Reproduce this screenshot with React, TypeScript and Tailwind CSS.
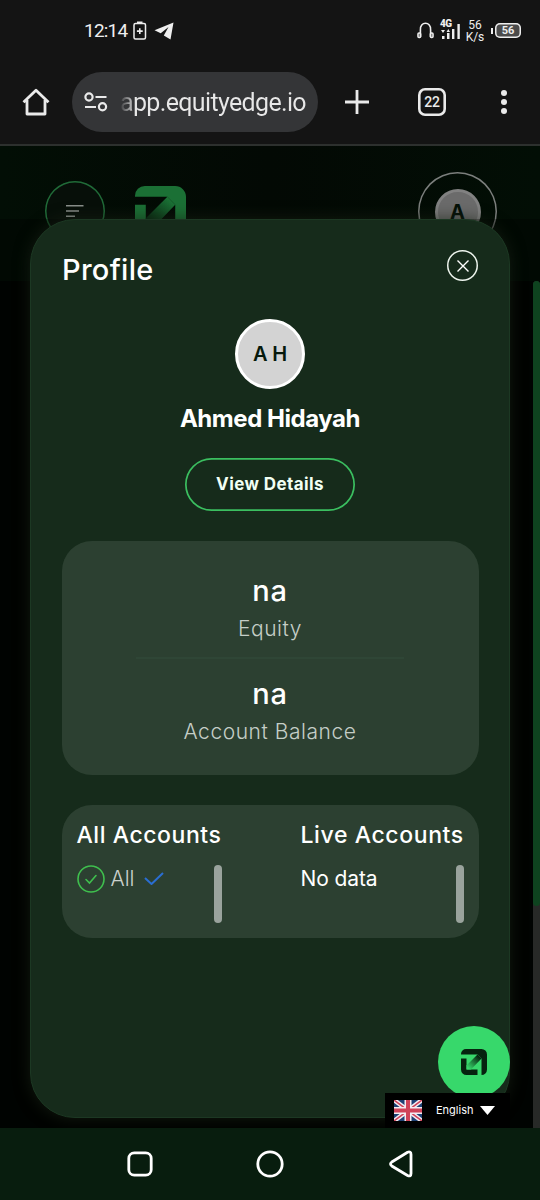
import { useId } from "react";

function LogoMark({ className, color, shade }: { className: string; color: string; shade: string }) {
    const id = useId();
    return (
        <svg viewBox="0 0 52 52" className={className} fill="none">
            <defs>
                <linearGradient id={id} x1="36" y1="16" x2="14" y2="38" gradientUnits="userSpaceOnUse">
                    <stop offset="0" stopColor={color} />
                    <stop offset="1" stopColor={shade} />
                </linearGradient>
            </defs>
            <path d="M0 11V10A10 10 0 0 1 10 0H41A11 11 0 0 1 52 11V41A11 11 0 0 1 41 52H41V19L33 11Z" fill={color} />
            <path d="M0 19H11V41H33V52H11A11 11 0 0 1 0 41Z" fill={color} />
            <path d="M33 11L41 19L20 41H11V33Z" fill={`url(#${id})`} />
        </svg>
    );
}

function StatusBar() {
    return (
        <div className="flex h-[61px] shrink-0 items-center pl-[84px] pr-[18px] text-[#eee]">
            <span className="w-[44px] whitespace-nowrap font-[Roboto] text-[19px] leading-none tracking-[-0.8px]">12:14</span>
            <svg viewBox="0 0 14 19" className="ml-[5px] h-[19px] w-[14px]" fill="none" stroke="currentColor" strokeWidth="1.5">
                <rect x="1" y="2.5" width="11.5" height="15.5" rx="1.5" />
                <path d="M4 1.2H9.5M6.8 7.2V13M3.9 10.1H9.7" strokeWidth="1.6" />
            </svg>
            <svg viewBox="0 0 20 18" className="ml-[7px] h-[18px] w-[20px]" fill="currentColor">
                <path d="M.5 8.3L19.5.5L16.5 17.5L9.8 13.5L14.5 5L6.7 11.2Z" />
            </svg>
            <svg viewBox="0 0 17 17" className="ml-auto h-[17px] w-[17px]" fill="none" stroke="currentColor" strokeWidth="1.6">
                <path d="M3.4 15V8C2.5-1 14.5-1 13.6 8V15" />
                <rect x="1" y="11" width="2.6" height="4.5" rx="1" />
                <rect x="13.4" y="11" width="2.6" height="4.5" rx="1" />
            </svg>
            <div className="relative ml-[6px] h-[20px] w-[21px]">
                <span className="absolute -top-px left-0 font-[Roboto] text-[10px] font-black leading-[8px] tracking-[-0.6px]">4G</span>
                <svg viewBox="0 0 21 20" className="h-full w-full" fill="currentColor">
                    <path d="M1 9H5L3 12ZM6.5 11H10L8.3 8ZM2 15H4.5V18H2ZM7 12H9.5V18H7ZM12 8H14.4V18H12ZM17.4 3H19.8V18H17.4Z" />
                </svg>
            </div>
            <div className="ml-[3px] w-[22px] whitespace-nowrap text-center font-[Roboto] text-[12px] leading-[12px] tracking-[-0.1px]">
                56
                <br />
                K/s
            </div>
            <div className="ml-[5px] h-[6px] w-[2px] bg-[#eee]"></div>
            <div className="ml-[2px] mr-px flex h-[15px] w-[26px] items-center justify-center rounded-[5px] bg-[#4b4b4b] font-[Roboto] text-[11px] font-bold leading-none inset-ring-[1.5px] inset-ring-[#eee]">
                56
            </div>
        </div>
    );
}

function BrowserBar() {
    return (
        <div className="flex h-[82px] shrink-0 items-center text-[#eaeaea]">
            <svg viewBox="0 0 28 28" className="ml-[22px] h-[28px] w-[28px]" fill="none" stroke="currentColor" strokeWidth="2.8" strokeLinejoin="round">
                <path d="M1.5 14.2L14 2.2L26.5 14.2M5 12V26H23V12" />
            </svg>
            <div className="ml-[22px] flex h-[60px] w-[246px] items-center rounded-full bg-[#343537]">
                <svg viewBox="0 0 24 20" className="ml-[12px] h-[20px] w-[24px]" fill="none" stroke="currentColor" strokeWidth="2.2">
                    <circle cx="5" cy="5" r="3.6" />
                    <circle cx="18.5" cy="14.7" r="3.6" />
                    <path d="M11.5 5H22.5M1 15H12" />
                </svg>
                <span className="ml-[12px] mt-[2px] w-[190px] whitespace-nowrap bg-linear-to-r from-[#3a3b3d] to-[#e8e8e8] to-8% bg-clip-text font-[Roboto] text-[25px] leading-[34px] tracking-[-0.65px] text-transparent">
                    app.equityedge.io
                </span>
            </div>
            <svg viewBox="0 0 24 24" className="ml-[27px] h-[24px] w-[24px]" stroke="currentColor" strokeWidth="2.8">
                <path d="M12 0V24M0 12H24" />
            </svg>
            <div className="ml-[49px] flex h-[28px] w-[28px] items-center justify-center rounded-[7px] font-[Roboto] text-[14px] font-medium leading-none tracking-[-0.3px] inset-ring-[2.6px] inset-ring-[#eaeaea]">
                22
            </div>
            <svg viewBox="0 0 6 24" className="ml-[55px] h-[24px] w-[6px]" fill="currentColor">
                <circle cx="3" cy="3" r="3" />
                <circle cx="3" cy="12" r="3" />
                <circle cx="3" cy="21" r="3" />
            </svg>
        </div>
    );
}

function PageHeader() {
    return (
        <div className="flex h-[135px] items-start bg-linear-to-r from-[#020e05] via-[#030904] to-[#020e05]">
            <div className="ml-[45px] mt-[35px] flex h-[60px] w-[60px] items-center justify-center rounded-full bg-[#070f09] inset-ring-[1.5px] inset-ring-[#206b38]">
                <svg viewBox="0 0 18 14" className="h-[14px] w-[18px]" stroke="#8a8f8b" strokeWidth="1.6">
                    <path d="M0 1.8H17.5M0 7H13M0 12.2H9" />
                </svg>
            </div>
            <LogoMark className="ml-[30px] mt-[40px] h-[51px] w-[51px]" color="#1b7035" shade="#06240f" />
            <div className="ml-auto mr-[43px] mt-[26px] flex h-[79px] w-[79px] items-center justify-center rounded-full inset-ring-[1.5px] inset-ring-[#7c7f7d]">
                <div className="flex h-[46px] w-[46px] items-center justify-center rounded-full border-[3px] border-[#818181] bg-[#6b6b6b] font-[Inter] text-[20px] font-bold leading-none text-[#041007]">
                    A
                </div>
            </div>
        </div>
    );
}

function Stat({ value, children }: { value: string; children: React.ReactNode }) {
    return (
        <div className="text-center">
            <p className="font-[Inter] text-[29px] font-medium leading-[36px] tracking-[0.9px] text-white">{value}</p>
            <p className="mt-[6px] font-[Inter] text-[21px] font-light leading-[28px] tracking-[0.55px] text-[#c5cec7]">{children}</p>
        </div>
    );
}

function ProfileModal() {
    return (
        <div className="absolute left-[30px] top-[73px] h-[899px] w-[480px] rounded-[45px] border border-[#1c3823] bg-[#162b1b] px-[31px] text-white shadow-[0_0_16px_rgba(26,34,22,0.7)]">
            <div className="flex h-[98px] items-start justify-between">
                <h2 className="mt-[32px] font-[Inter] text-[29px] font-medium leading-[36px] tracking-[0.3px]">Profile</h2>
                <button className="mt-[30px] flex h-[31px] w-[31px] items-center justify-center rounded-full inset-ring-[1.5px] inset-ring-[#eef5ee]">
                    <svg viewBox="0 0 12 12" className="h-[12px] w-[12px]" stroke="currentColor" strokeWidth="1.4">
                        <path d="M.5 .5L11.5 11.5M11.5 .5L.5 11.5" />
                    </svg>
                </button>
            </div>
            <div className="flex flex-col items-center">
                <div className="mt-px flex h-[70px] w-[70px] items-center justify-center rounded-full border-[3px] border-white bg-[#d3d3d3] font-[Inter] text-[20px] font-semibold tracking-[-0.2px] text-[#06190c]">
                    A H
                </div>
                <p className="mt-[14px] whitespace-nowrap font-[Inter] text-[24px] font-bold leading-[32px] tracking-[-0.45px]">Ahmed Hidayah</p>
                <button className="mt-[23px] h-[53px] w-[170px] rounded-full font-[Inter] text-[17px] font-bold tracking-[0.4px] text-[#f1fff3] inset-ring-[1.7px] inset-ring-[#3bbf60]">
                    View Details
                </button>
            </div>
            <div className="-mx-[0.5px] mt-[30px] h-[234px] rounded-[30px] bg-[#2c4031] pt-[32px]">
                <Stat value="na">Equity</Stat>
                <div className="mx-auto mb-[17px] mt-[14px] h-[2px] w-[268px] bg-[#2f4636]"></div>
                <Stat value="na">Account Balance</Stat>
            </div>
            <div className="-mx-[0.5px] mt-[30px] flex h-[133px] justify-between rounded-[30px] bg-[#2c4031] px-[15px] pt-[14px] font-[Inter]">
                <div className="w-[145px]">
                    <h3 className="whitespace-nowrap text-[23px] font-medium leading-[32px] tracking-[0.55px]">All Accounts</h3>
                    <div className="mt-[14px] flex items-start justify-between">
                        <div className="flex h-[27px] items-center">
                            <svg viewBox="0 0 28 28" className="h-[28px] w-[28px]" fill="none" stroke="#3fbf4e" strokeWidth="1.6">
                                <circle cx="14" cy="14" r="13" />
                                <path d="M9 14.5L12.5 18L19 10.5" strokeLinecap="round" />
                            </svg>
                            <span className="ml-[6px] w-[24px] text-[21px] font-light text-[#cbd1cc]">All</span>
                            <svg viewBox="0 0 20 14" className="ml-[9px] h-[14px] w-[20px]" fill="none" stroke="#2a6ed2" strokeWidth="2">
                                <path d="M1 6L7.5 12L19 1" strokeLinejoin="round" />
                            </svg>
                        </div>
                        <div className="h-[58px] w-[8px] rounded-full bg-[#9aa39d]"></div>
                    </div>
                </div>
                <div className="w-[163px]">
                    <h3 className="whitespace-nowrap text-[23px] font-medium leading-[32px] tracking-[0.6px]">Live Accounts</h3>
                    <div className="mt-[14px] flex items-start justify-between">
                        <span className="text-[21px] leading-[28px] tracking-[-0.1px]">No data</span>
                        <div className="h-[58px] w-[8px] rounded-full bg-[#9aa39d]"></div>
                    </div>
                </div>
            </div>
        </div>
    );
}

function LanguageSwitch() {
    return (
        <div className="absolute bottom-0 right-[30px] flex h-[35px] w-[125px] items-center bg-black text-white">
            <svg viewBox="0 0 28 21" className="ml-[9px] h-[21px] w-[28px]">
                <path fill="#1d4175" d="M0 0H28V21H0Z" />
                <path stroke="#f3edf2" strokeWidth="4.5" d="M0 0L28 21M28 0L0 21" />
                <path stroke="#cf4258" strokeWidth="1.5" d="M0 0L28 21M28 0L0 21" />
                <path stroke="#f3edf2" strokeWidth="7" d="M14 0V21M0 10.5H28" />
                <path stroke="#cf4258" strokeWidth="4" d="M14 0V21M0 10.5H28" />
            </svg>
            <span className="ml-[14px] w-[38px] whitespace-nowrap font-[Inter] text-[11px] leading-none">English</span>
            <svg viewBox="0 0 15 9" className="ml-[6px] h-[9px] w-[15px]" fill="currentColor">
                <path d="M0 0H15L7.5 9Z" />
            </svg>
        </div>
    );
}

export default function App() {
    return (
        <main className="flex h-[1200px] w-[540px] flex-col overflow-hidden bg-[#141414]">
            <StatusBar />
            <BrowserBar />
            <div className="mt-px h-[2px] shrink-0 bg-[#2d302e]"></div>
            <div className="relative h-[982px] shrink-0 overflow-hidden bg-[#010502]">
                <PageHeader />
                <div className="ml-auto h-[847px] w-[7px] rounded-t-full bg-[#393b39]">
                    <div className="h-[625px] rounded-full bg-[#15602d]"></div>
                </div>
                <div className="absolute inset-x-0 bottom-0 top-[73px] bg-black/30"></div>
                <ProfileModal />
                <div className="absolute bottom-[30px] right-[30px] flex h-[72px] w-[72px] items-center justify-center rounded-full bg-[#37d86b]">
                    <LogoMark className="h-[26px] w-[26px]" color="#06230f" shade="#37d86b" />
                </div>
                <LanguageSwitch />
            </div>
            <nav className="flex h-[72px] shrink-0 items-center bg-[#081d0e] text-white">
                <svg viewBox="0 0 26 26" className="ml-[127px] h-[26px] w-[26px]" fill="none" stroke="currentColor" strokeWidth="2.8">
                    <rect x="1.8" y="1.8" width="22.4" height="22.4" rx="5.5" />
                </svg>
                <svg viewBox="0 0 28 28" className="ml-[103px] h-[28px] w-[28px]" fill="none" stroke="currentColor" strokeWidth="2.8">
                    <circle cx="14" cy="14" r="12.2" />
                </svg>
                <svg viewBox="0 0 24 28" className="ml-[105px] h-[28px] w-[24px]" fill="none" stroke="currentColor" strokeWidth="2.8">
                    <path d="M2.8 12L18.5 2.2Q22 1 22 4.5V23.5Q22 27 18.5 25.5L2.8 16Q.2 14 2.8 12Z" />
                </svg>
            </nav>
        </main>
    );
}
